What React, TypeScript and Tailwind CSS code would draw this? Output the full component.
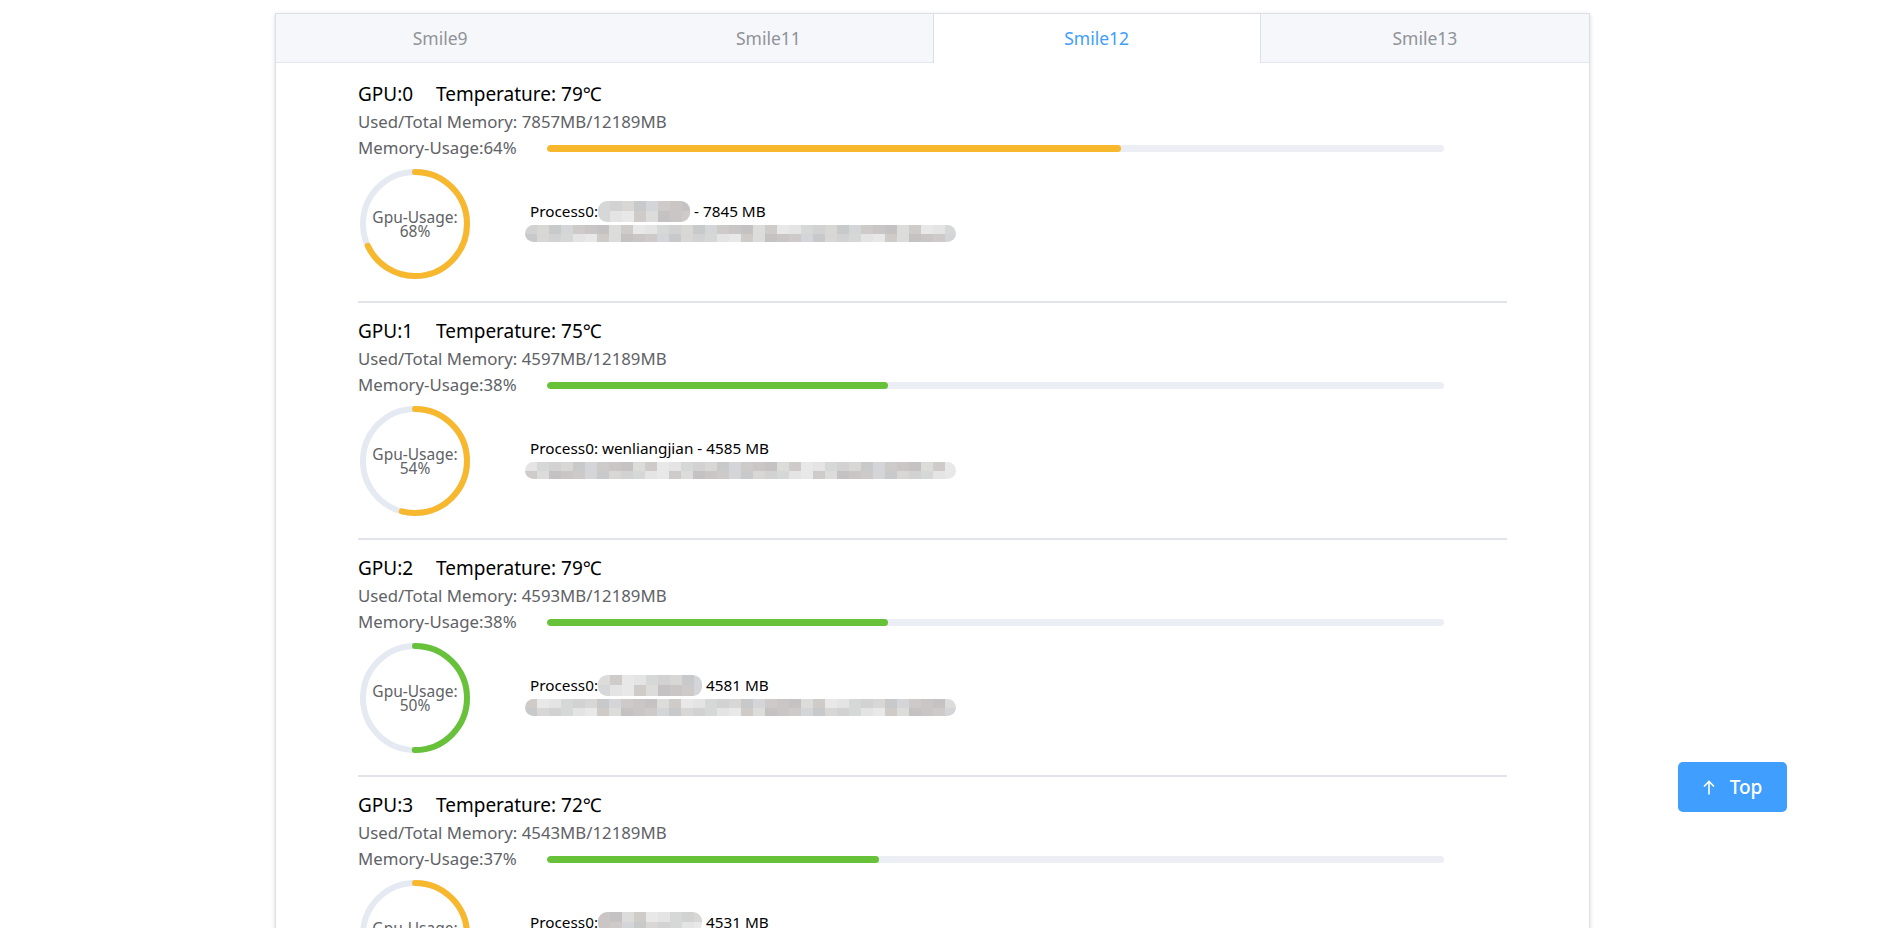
import React from 'react';

type Gpu = {
  id: number;
  temp: number;
  used: number;
  total: number;
  mem: number;
  gpu: number;
  proc: React.ReactNode;
  seed: number;
};

const YELLOW = '#f7b82d';
const GREEN = '#67c23a';

const PALETTE = [
  '#d9d7d6', '#cfcbc9', '#d4d5d8', '#e3e4e3', '#c9c6c5', '#d2d2d3',
  '#dcdcdb', '#c7c9cb', '#e8e8e8', '#cdcac9', '#d6d8d8', '#c4c2c2',
];

const Mosaic: React.FC<{ width: number; height: number; seed: number }> = ({ width, height, seed }) => {
  const count = Math.ceil(width / 12);
  return (
    <div className="flex shrink-0 overflow-hidden rounded-[9px]" style={{ width, height }}>
      {Array.from({ length: count }).map((_, i) => (
        <div key={i} className="flex h-full w-[12px] shrink-0 flex-col">
          <div className="flex-1" style={{ background: PALETTE[(i * 7 + seed * 5) % PALETTE.length] }} />
          <div className="flex-1" style={{ background: PALETTE[(i * 5 + seed * 3 + 4) % PALETTE.length] }} />
        </div>
      ))}
    </div>
  );
};

const gpus: Gpu[] = [
  {
    id: 0, temp: 79, used: 7857, total: 12189, mem: 64, gpu: 68, seed: 1,
    proc: (
      <>
        <span>Process0:</span>
        <Mosaic width={92} height={21} seed={2} />
        <span> - 7845 MB</span>
      </>
    ),
  },
  {
    id: 1, temp: 75, used: 4597, total: 12189, mem: 38, gpu: 54, seed: 3,
    proc: <span>Process0: wenliangjian - 4585 MB</span>,
  },
  {
    id: 2, temp: 79, used: 4593, total: 12189, mem: 38, gpu: 50, seed: 5,
    proc: (
      <>
        <span>Process0:</span>
        <Mosaic width={104} height={21} seed={6} />
        <span> 4581 MB</span>
      </>
    ),
  },
  {
    id: 3, temp: 72, used: 4543, total: 12189, mem: 37, gpu: 62, seed: 7,
    proc: (
      <>
        <span>Process0:</span>
        <Mosaic width={104} height={21} seed={8} />
        <span> 4531 MB</span>
      </>
    ),
  },
];

const Ring: React.FC<{ value: number }> = ({ value }) => {
  const r = 52;
  const c = 2 * Math.PI * r;
  const color = value > 50 ? YELLOW : GREEN;
  return (
    <div className="relative ml-[2px] h-[110px] w-[110px] shrink-0">
      <svg width="110" height="110" viewBox="0 0 110 110">
        <circle cx="55" cy="55" r={r} fill="none" stroke="#e5e9f2" strokeWidth="6" />
        <circle
          cx="55"
          cy="55"
          r={r}
          fill="none"
          stroke={color}
          strokeWidth="6"
          strokeLinecap="round"
          strokeDasharray={`${(value / 100) * c} ${c}`}
          transform="rotate(-90 55 55)"
        />
      </svg>
      <div className="absolute inset-0 flex flex-col items-center justify-center text-[15.5px] leading-[14px] text-[#606266]">
        <span>Gpu-Usage:</span>
        <span>{value}%</span>
      </div>
    </div>
  );
};

const GpuBlock: React.FC<{ g: Gpu }> = ({ g }) => {
  const barColor = g.mem > 50 ? YELLOW : GREEN;
  return (
    <div className="pt-[13px]">
      <div className="flex h-[30px] items-center text-[19px] leading-[30px] text-black">
        <span className="w-[78px]">GPU:{g.id}</span>
        <span>Temperature: {g.temp}℃</span>
      </div>
      <div className="h-[26px] text-[16.8px] leading-[26px] text-[#606266]">
        Used/Total Memory: {g.used}MB/{g.total}MB
      </div>
      <div className="flex h-[26px] items-center text-[16.8px] leading-[26px] text-[#606266]">
        <span className="w-[189px]">Memory-Usage:{g.mem}%</span>
        <div className="h-[7px] w-[897px] overflow-hidden rounded-full bg-[#ebeef5]">
          <div className="h-full rounded-full" style={{ width: `${g.mem}%`, background: barColor }} />
        </div>
      </div>
      <div className="mt-[8px] flex items-start">
        <Ring value={g.gpu} />
        <div className="ml-[60px] mt-[32px] text-[15.3px] leading-[20px] text-black">
          <div className="flex h-[20px] items-center whitespace-pre">{g.proc}</div>
          <div className="ml-[-5px] mt-[4px]">
            <Mosaic width={431} height={17} seed={g.seed} />
          </div>
        </div>
      </div>
      <div className="mt-[22px] h-[2px] bg-[#e1e4ea]" />
    </div>
  );
};

const tabs = ['Smile9', 'Smile11', 'Smile12', 'Smile13'];

export default function App() {
  return (
    <div
      className="min-h-screen bg-white pt-[13px]"
      style={{ fontFamily: '"Noto Sans", "Noto Sans CJK SC", "DejaVu Sans", sans-serif' }}
    >
      <div className="ml-[275px] w-[1315px] border border-[#dcdfe6] bg-white shadow-[0_2px_4px_0_rgba(0,0,0,0.12),0_0_6px_0_rgba(0,0,0,0.04)]">
        <div className="grid grid-cols-4">
          {tabs.map((t) => (
            <div
              key={t}
              className={
                t === 'Smile12'
                  ? 'flex h-[49px] items-center justify-center border-x border-[#dcdfe6] bg-white text-[17.5px] text-[#409eff]'
                  : 'flex h-[49px] items-center justify-center border-b border-[#e4e7ed] bg-[#f5f7fa] text-[17.5px] text-[#909399]'
              }
            >
              {t}
            </div>
          ))}
        </div>
        <div className="px-[82px] pt-[3px]">
          {gpus.map((g) => (
            <GpuBlock key={g.id} g={g} />
          ))}
        </div>
      </div>

      <button className="fixed bottom-[116px] right-[98px] flex h-[50px] w-[109px] items-center justify-center gap-[15px] rounded-[5px] bg-[#409eff] text-[19px] font-medium text-white">
        <svg width="12" height="15" viewBox="0 0 12 15" fill="none" stroke="white" strokeWidth="1.6">
          <path d="M6 14.5V1.5" />
          <path d="M1 6.5L6 1.5L11 6.5" />
        </svg>
        <span>Top</span>
      </button>
    </div>
  );
}
